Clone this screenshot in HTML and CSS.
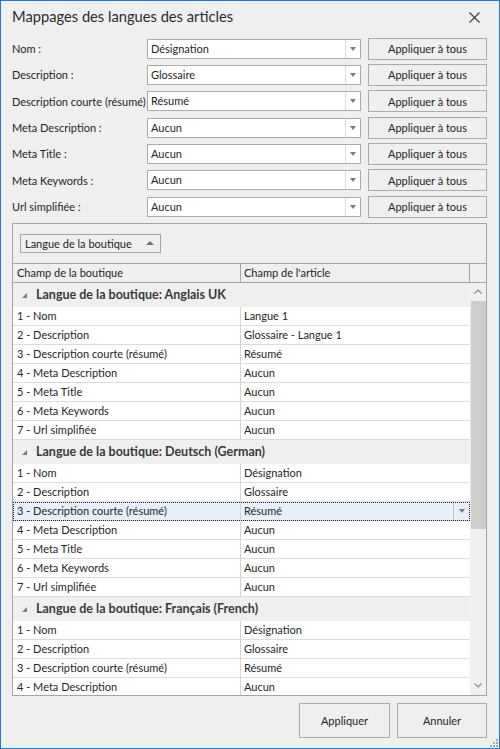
FILE: index.html
```html
<!DOCTYPE html>
<html lang="fr">
<head>
  <meta charset="UTF-8" />
  <title>Mappages des langues des articles</title>
  <link rel="stylesheet" href="styles.css">
</head>
<body>

  <div class="window">
    <div class="titlebar">
      <span class="title">Mappages des langues des articles</span>
      <svg class="close" width="11" height="11" viewBox="0 0 11 11">
        <path d="M0.5 0.5 L10.5 10.5 M10.5 0.5 L0.5 10.5" stroke="#3a3a3a" stroke-width="1.1" fill="none" />
      </svg>
    </div>

    <div class="mappings">
      <div class="map-row">
        <label>Nom :</label>
        <div class="combo"><span class="combo-text">Désignation</span><span class="combo-btn"><i class="arrow-down"></i></span></div>
        <button class="apply-all">Appliquer à tous</button>
      </div>
      <div class="map-row">
        <label>Description :</label>
        <div class="combo"><span class="combo-text">Glossaire</span><span class="combo-btn"><i class="arrow-down"></i></span></div>
        <button class="apply-all">Appliquer à tous</button>
      </div>
      <div class="map-row">
        <label>Description courte (résumé)</label>
        <div class="combo"><span class="combo-text">Résumé</span><span class="combo-btn"><i class="arrow-down"></i></span></div>
        <button class="apply-all">Appliquer à tous</button>
      </div>
      <div class="map-row">
        <label>Meta Description :</label>
        <div class="combo"><span class="combo-text">Aucun</span><span class="combo-btn"><i class="arrow-down"></i></span></div>
        <button class="apply-all">Appliquer à tous</button>
      </div>
      <div class="map-row">
        <label>Meta Title :</label>
        <div class="combo"><span class="combo-text">Aucun</span><span class="combo-btn"><i class="arrow-down"></i></span></div>
        <button class="apply-all">Appliquer à tous</button>
      </div>
      <div class="map-row">
        <label>Meta Keywords :</label>
        <div class="combo"><span class="combo-text">Aucun</span><span class="combo-btn"><i class="arrow-down"></i></span></div>
        <button class="apply-all">Appliquer à tous</button>
      </div>
      <div class="map-row">
        <label>Url simplifiée :</label>
        <div class="combo"><span class="combo-text">Aucun</span><span class="combo-btn"><i class="arrow-down"></i></span></div>
        <button class="apply-all">Appliquer à tous</button>
      </div>
    </div>

    <div class="grid">
      <div class="group-panel">
        <div class="group-chip"><span>Langue de la boutique</span><i class="arrow-up"></i></div>
      </div>
      <div class="grid-header">
        <div class="hcell col1">Champ de la boutique</div>
        <div class="hcell col2">Champ de l'article</div>
        <div class="hcell col-sb"></div>
      </div>
      <div class="grid-body">
        <div class="rows">
          <div class="group-row"><i class="expand"></i>Langue de la boutique: Anglais UK</div>
          <div class="row"><div class="cell col1">1 - Nom</div><div class="cell col2">Langue 1</div></div>
          <div class="row"><div class="cell col1">2 - Description</div><div class="cell col2">Glossaire - Langue 1</div></div>
          <div class="row"><div class="cell col1">3 - Description courte (résumé)</div><div class="cell col2">Résumé</div></div>
          <div class="row"><div class="cell col1">4 - Meta Description</div><div class="cell col2">Aucun</div></div>
          <div class="row"><div class="cell col1">5 - Meta Title</div><div class="cell col2">Aucun</div></div>
          <div class="row"><div class="cell col1">6 - Meta Keywords</div><div class="cell col2">Aucun</div></div>
          <div class="row"><div class="cell col1">7 - Url simplifiée</div><div class="cell col2">Aucun</div></div>

          <div class="group-row"><i class="expand"></i>Langue de la boutique: Deutsch (German)</div>
          <div class="row"><div class="cell col1">1 - Nom</div><div class="cell col2">Désignation</div></div>
          <div class="row"><div class="cell col1">2 - Description</div><div class="cell col2">Glossaire</div></div>
          <div class="row focused">
            <div class="cell col1">3 - Description courte (résumé)</div>
            <div class="cell col2 editing"><span class="edit-text">Résumé</span><span class="edit-btn"><i class="arrow-down"></i></span></div>
          </div>
          <div class="row"><div class="cell col1">4 - Meta Description</div><div class="cell col2">Aucun</div></div>
          <div class="row"><div class="cell col1">5 - Meta Title</div><div class="cell col2">Aucun</div></div>
          <div class="row"><div class="cell col1">6 - Meta Keywords</div><div class="cell col2">Aucun</div></div>
          <div class="row"><div class="cell col1">7 - Url simplifiée</div><div class="cell col2">Aucun</div></div>

          <div class="group-row"><i class="expand"></i>Langue de la boutique: Français (French)</div>
          <div class="row"><div class="cell col1">1 - Nom</div><div class="cell col2">Désignation</div></div>
          <div class="row"><div class="cell col1">2 - Description</div><div class="cell col2">Glossaire</div></div>
          <div class="row"><div class="cell col1">3 - Description courte (résumé)</div><div class="cell col2">Résumé</div></div>
          <div class="row"><div class="cell col1">4 - Meta Description</div><div class="cell col2">Aucun</div></div>
        </div>
        <div class="scrollbar">
          <div class="sb-arrow">
            <svg width="8" height="5" viewBox="0 0 8 5"><polyline points="0.5,4.5 4,1 7.5,4.5" stroke="#8c8c8c" stroke-width="1.2" fill="none" /></svg>
          </div>
          <div class="sb-thumb"></div>
          <div class="sb-track"></div>
          <div class="sb-arrow">
            <svg width="8" height="5" viewBox="0 0 8 5"><polyline points="0.5,0.5 4,4 7.5,0.5" stroke="#8c8c8c" stroke-width="1.2" fill="none" /></svg>
          </div>
        </div>
      </div>
    </div>

    <div class="footer">
      <button class="dlg-btn apply">Appliquer</button>
      <button class="dlg-btn cancel">Annuler</button>
    </div>

    <svg class="grip" width="8" height="8" viewBox="0 0 8 8">
      <rect x="6" y="0" width="2" height="2" fill="#a8a8a8" />
      <rect x="3" y="3" width="2" height="2" fill="#a8a8a8" />
      <rect x="6" y="3" width="2" height="2" fill="#a8a8a8" />
      <rect x="0" y="6" width="2" height="2" fill="#a8a8a8" />
      <rect x="3" y="6" width="2" height="2" fill="#a8a8a8" />
      <rect x="6" y="6" width="2" height="2" fill="#a8a8a8" />
    </svg>
  </div>

</body>
</html>
```

FILE: styles.css
```css
* {
  box-sizing: border-box;
  margin: 0;
  padding: 0;
}

body {
  font-family: Lato, "Open Sans", sans-serif;
  font-size: 11px;
  color: #262626;
  background: #efefef;
}

.window {
  position: relative;
  width: 500px;
  height: 749px;
  border: 1px solid #1e7bd5;
  background: #efefef;
  padding: 0 12px 0 11px;
  display: flex;
  flex-direction: column;
}

/* title bar */
.titlebar {
  height: 34px;
  display: flex;
  justify-content: space-between;
  align-items: flex-start;
}

.title {
  font-size: 14.7px;
  line-height: 31px;
  color: #2b2b2b;
}

.close {
  margin-top: 11px;
  margin-right: 7px;
}

/* mapping form */
.mappings {
  display: flex;
  flex-direction: column;
  padding-top: 0.5px;
}

.map-row {
  height: 26.33px;
  display: flex;
  align-items: center;
}

.map-row label {
  width: 135px;
  white-space: nowrap;
}

.combo {
  width: 214px;
  height: 20px;
  border: 1px solid #ababab;
  background: #fff;
  display: flex;
}

.combo-text {
  flex: 1;
  padding-left: 3px;
  line-height: 18px;
}

.combo-btn {
  width: 15px;
  border-left: 1px solid #dcdcdc;
  display: flex;
  align-items: center;
  justify-content: center;
}

.arrow-down {
  width: 0;
  height: 0;
  border-left: 3.5px solid transparent;
  border-right: 3.5px solid transparent;
  border-top: 4px solid #7a7a7a;
}

.arrow-up {
  width: 0;
  height: 0;
  border-left: 4px solid transparent;
  border-right: 4px solid transparent;
  border-bottom: 4px solid #707070;
}

button {
  font-family: inherit;
  font-size: 11px;
  color: #262626;
  background: #efefef;
  border: 1px solid #ababab;
}

.apply-all {
  width: 119px;
  height: 22px;
  margin-left: 7px;
}

/* grid */
.grid {
  margin-top: 3px;
  height: 473px;
  border: 1px solid #a5a5a5;
  background: #fff;
  display: flex;
  flex-direction: column;
}

.group-panel {
  height: 40px;
  background: #efefef;
  border-bottom: 1px solid #a5a5a5;
  padding: 10px 0 0 7px;
}

.group-chip {
  width: 141px;
  height: 19px;
  border: 1px solid #a5a5a5;
  padding: 0 6px 0 4px;
  display: flex;
  align-items: center;
  justify-content: space-between;
  white-space: nowrap;
}

.grid-header {
  height: 19px;
  display: flex;
  background: #efefef;
  border-bottom: 1px solid #a5a5a5;
}

.hcell {
  line-height: 18px;
  border-right: 1px solid #a5a5a5;
}

.hcell.col1 {
  width: 228px;
  padding-left: 4px;
}

.hcell.col2 {
  width: 229px;
  padding-left: 3px;
}

.hcell.col-sb {
  flex: 1;
  border-right: none;
}

.grid-body {
  flex: 1;
  display: flex;
  overflow: hidden;
}

.rows {
  width: 457px;
  overflow: hidden;
}

.group-row {
  height: 24px;
  background: #efefef;
  font-size: 12.5px;
  font-weight: bold;
  color: #3a3a3a;
  padding-left: 9px;
  display: flex;
  align-items: center;
  white-space: nowrap;
}

.expand {
  width: 0;
  height: 0;
  border-left: 5px solid transparent;
  border-bottom: 5px solid #7c7c7c;
  margin-right: 9px;
  margin-top: 1px;
}

.row {
  height: 19px;
  display: flex;
  border-bottom: 1px solid #dcdcdc;
  line-height: 18px;
}

.cell {
  white-space: nowrap;
  overflow: hidden;
}

.cell.col1 {
  width: 228px;
  padding-left: 4px;
  border-right: 1px solid #d4d4d4;
}

.cell.col2 {
  flex: 1;
  padding-left: 3px;
}

.row.focused {
  background: #e5f0fa;
  outline: 1px dotted #222;
  outline-offset: -1px;
}

.cell.editing {
  display: flex;
}

.edit-text {
  flex: 1;
}

.edit-btn {
  width: 17px;
  border-left: 1px solid #c6c6c6;
  display: flex;
  align-items: center;
  justify-content: center;
}

/* scrollbar */
.scrollbar {
  flex: 1;
  background: #f0f0f0;
  display: flex;
  flex-direction: column;
}

.sb-arrow {
  height: 18px;
  display: flex;
  align-items: center;
  justify-content: center;
}

.sb-thumb {
  height: 228px;
  margin-left: 1px;
  background: #cdcdcd;
}

.sb-track {
  flex: 1;
}

/* footer */
.footer {
  margin-top: 7px;
  display: flex;
  justify-content: flex-end;
}

.dlg-btn {
  height: 35px;
}

.dlg-btn.apply {
  width: 91px;
}

.dlg-btn.cancel {
  width: 90px;
  margin-left: 7px;
}

.grip {
  position: absolute;
  right: 1px;
  bottom: 1px;
}
```
